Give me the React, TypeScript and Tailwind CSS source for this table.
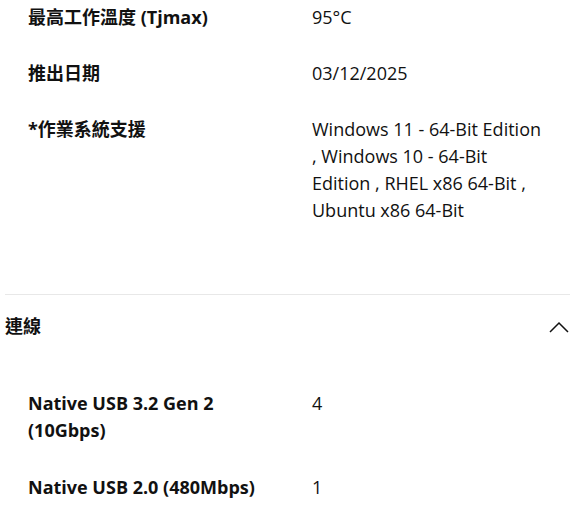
const cpu = [
  { label: '最高工作溫度 (Tjmax)', value: '95°C' },
  { label: '推出日期', value: '03/12/2025' },
  {
    label: '*作業系統支援',
    value: 'Windows 11 - 64-Bit Edition , Windows 10 - 64-Bit Edition , RHEL x86 64-Bit , Ubuntu x86 64-Bit',
  },
];

const connectivity = [
  { label: 'Native USB 3.2 Gen 2 (10Gbps)', value: '4' },
  { label: 'Native USB 2.0 (480Mbps)', value: '1' },
];

function SpecRow({ label, value }: { label: string; value: string }) {
  return (
    <div className="flex">
      <div className="w-[312px] shrink-0 pl-[28px] pr-[40px] font-bold">{label}</div>
      <div className="flex-1 pr-[24px]">{value}</div>
    </div>
  );
}

export default function App() {
  return (
    <div
      className="w-[570px] h-[505px] overflow-hidden bg-white text-[18px] leading-[27px] text-[#111]"
      style={{ fontFamily: '"Open Sans", "Noto Sans CJK TC", sans-serif' }}
    >
      {/* 處理器 specs */}
      <div className="flex flex-col gap-[29px] pt-[4px] pb-[70px]">
        {cpu.map(row => (
          <SpecRow key={row.label} {...row} />
        ))}
      </div>

      {/* 連線 section */}
      <div className="ml-[5px] border-t border-[#e8e8e8]">
        <div className="flex items-center justify-between pt-[18px] pr-[1px]">
          <h2 className="font-bold">連線</h2>
          <svg className="h-[14px] w-[20px]" viewBox="0 0 20 14" fill="none" stroke="#111" strokeWidth={1.5}>
            <polyline points="1,12 10,3 19,12" />
          </svg>
        </div>
        <div className="-ml-[5px] mt-[50px] flex flex-col gap-[30px]">
          {connectivity.map(row => (
            <SpecRow key={row.label} {...row} />
          ))}
        </div>
      </div>
    </div>
  );
}
